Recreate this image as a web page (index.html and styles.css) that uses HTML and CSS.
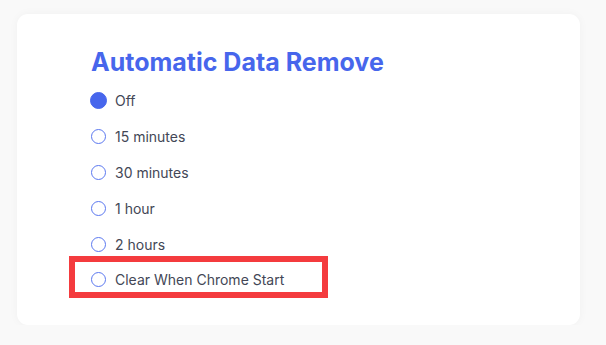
FILE: index.html
```html
<!DOCTYPE html>
<html lang="en">
<head>
    <meta charset="UTF-8">
    <meta name="viewport" content="width=device-width, initial-scale=1.0">
    <title>Automatic Data Remove</title>
    <link rel="stylesheet" href="styles.css">
</head>
<body>
    <div class="card">
        <h2 class="title">Automatic Data Remove</h2>
        <!-- Remove options -->
        <div class="options">
            <label class="option"><span class="radio checked"></span>Off</label>
            <label class="option"><span class="radio"></span>15 minutes</label>
            <label class="option"><span class="radio"></span>30 minutes</label>
            <label class="option"><span class="radio"></span>1 hour</label>
            <label class="option"><span class="radio"></span>2 hours</label>
            <label class="option highlight"><span class="radio"></span>Clear When Chrome Start</label>
        </div>
    </div>
</body>
</html>
```
FILE: styles.css
```css
body{
    margin: 0;
    background-color: #f9f9f9;
    font-family: Inter, "Noto Sans", sans-serif;
}
.card{
    width: 563px;
    height: 311px;
    margin: 14px 0 0 17px;
    background-color: #fff;
    border-radius: 11px;
    box-shadow: 0 0 10px rgba(0, 0, 0, 0.04);
    padding: 33px 0 0 74px;
    box-sizing: border-box;
}
.title{
    margin: 0;
    font-size: 25px;
    line-height: 30px;
    font-weight: 700;
    color: #4766ec;
}
.options{
    display: flex;
    flex-direction: column;
    align-items: flex-start;
    margin-top: 5px;
}
.option{
    display: flex;
    align-items: center;
    gap: 9px;
    height: 36px;
    font-size: 14px;
    color: #434756;
}
.radio{
    width: 13px;
    height: 13px;
    border: 1px solid #5b78f0;
    border-radius: 50%;
}
.radio.checked{
    background-color: #4766ec;
    border-color: #4766ec;
    width: 15px;
    height: 15px;
    margin-left: -1px;
    margin-right: -1px;
}
.highlight{
    border: 6px solid #f43b3e;
    margin: -6px 0 0 -22px;
    padding: 5px 38px 0 16px;
    height: 25px;
}
```
